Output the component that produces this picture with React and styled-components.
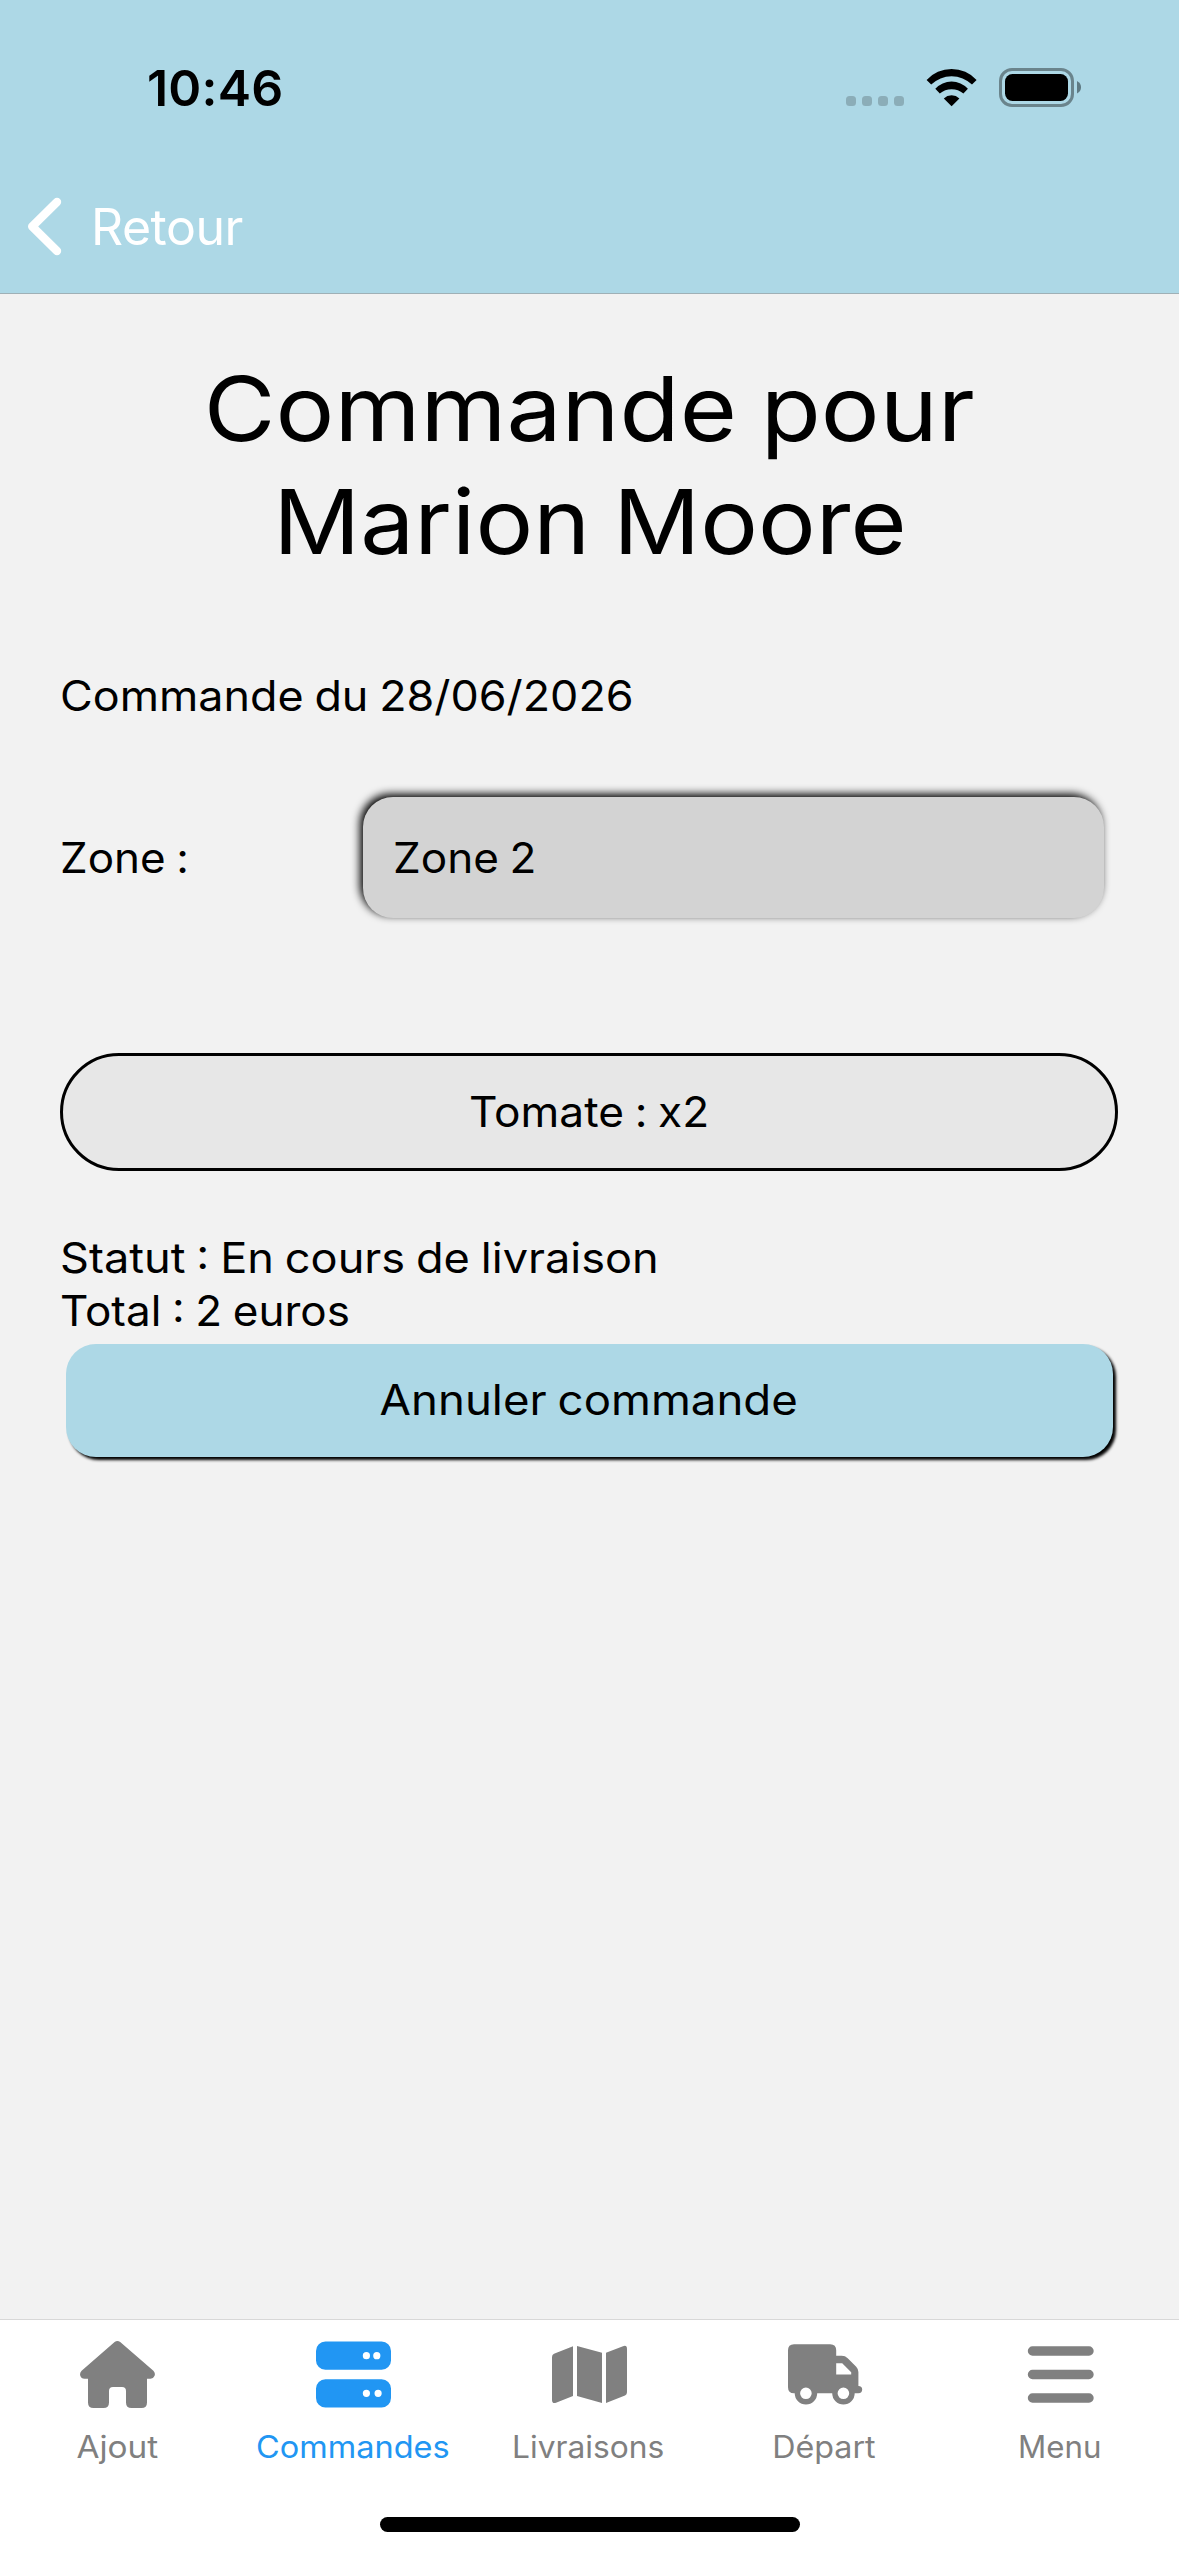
import React from "react";
import styled, { createGlobalStyle } from "styled-components";

const GlobalStyle = createGlobalStyle`
  * { box-sizing: border-box; }
  body { margin: 0; background: #f2f2f2; }
`;

const Screen = styled.div`
  width: 1179px;
  height: 2556px;
  display: flex;
  flex-direction: column;
  overflow: hidden;
  background: #f2f2f2;
  color: #000;
  font-family: Inter, "Liberation Sans", sans-serif;
  font-size: 42px;
  line-height: 53px;
`;

const Header = styled.header`
  height: 294px;
  flex: none;
  padding-top: 58px;
  background: #add8e6;
  border-bottom: 1px solid #9fb0b6;
`;

const StatusBar = styled.div`
  height: 60px;
  display: flex;
  justify-content: space-between;
  padding: 0 98px 0 147px;
`;

const Clock = styled.span`
  font-size: 50px;
  font-weight: 600;
  line-height: 60px;
  letter-spacing: 0.2px;
`;

const StatusIcons = styled.div`
  display: flex;
  align-items: flex-end;
  padding-bottom: 11px;
  svg { display: block; }
`;

const Signal = styled.div`
  display: flex;
  gap: 6px;
  margin: 0 22px 1px 0;
`;

const SignalDot = styled.i`
  width: 10px;
  height: 10px;
  border-radius: 3.5px;
  background: #8badb8;
`;

const WifiSvg = styled.svg`
  margin-right: 21px;
`;

const BackButton = styled.button`
  display: flex;
  align-items: center;
  gap: 27px;
  height: 60px;
  margin: 79px 0 0;
  padding: 0 0 0 26px;
  border: 0;
  background: none;
  color: #fff;
  font: 400 50px/60px Inter, "Liberation Sans", sans-serif;
  letter-spacing: -0.5px;
`;

const Content = styled.main`
  flex: 1;
  display: flex;
  flex-direction: column;
  padding: 58px 60px 0;
`;

/* Widened text: $wide is the horizontal stretch of the letters */
const Wide = styled.span`
  display: inline-block;
  word-spacing: -0.04em;
  white-space: pre;
  transform: scaleX(${(p) => p.$wide});
  transform-origin: ${(p) => (p.$center ? "center" : "left")};
`;

const Title = styled.h1`
  margin: 0;
  display: flex;
  flex-direction: column;
  align-items: center;
  font-size: 90px;
  font-weight: 420;
  line-height: 113px;
`;

const OrderDate = styled.div`
  margin-top: 91px;
`;

const ZoneRow = styled.div`
  display: flex;
  align-items: center;
  margin-top: 75px;
`;

const ZoneLabel = styled.label`
  width: 303px;
`;

const ZoneField = styled.div`
  width: 741px;
  height: 121px;
  display: flex;
  align-items: center;
  padding-left: 30px;
  border-radius: 30px;
  background: #d3d3d3;
  box-shadow: -3px -3px 8px #000;
`;

const ProductPill = styled.div`
  width: 1058px;
  height: 118px;
  margin-top: 135px;
  display: flex;
  align-items: center;
  justify-content: center;
  padding-bottom: 2px;
  border: 3px solid #000;
  border-radius: 60px;
  background: #e7e7e7;
`;

const Summary = styled.div`
  display: flex;
  flex-direction: column;
  margin-top: 60px;
`;

const CancelButton = styled.button`
  width: 1047px;
  height: 113px;
  margin: 7px 0 0 6px;
  display: flex;
  align-items: center;
  justify-content: center;
  padding: 0 1px 2px 0;
  border: 0;
  border-radius: 30px;
  background: #add8e6;
  box-shadow: 3px 3px 3px #000;
  color: #000;
  font: inherit;
`;

const TabBar = styled.nav`
  flex: none;
  height: 237px;
  display: grid;
  grid-template-columns: repeat(5, 1fr);
  grid-template-rows: 197px 15px;
  border-top: 1px solid #d8d8d8;
  background: #fff;
`;

const Tab = styled.a`
  display: flex;
  flex-direction: column;
  align-items: center;
  padding-top: 17px;
  color: ${(p) => (p.$active ? "#2196f3" : "#808080")};
  font-size: 30.5px;
  line-height: 38px;
  svg { display: block; margin-bottom: 16px; }
`;

const TabLabel = styled(Wide)`
  margin-right: 2px;
`;

const HomeIndicator = styled.div`
  grid-column: 1 / -1;
  justify-self: center;
  width: 420px;
  height: 15px;
  margin-left: 1px;
  border-radius: 8px;
  background: #000;
`;

const icons = {
  home: (
    <path
      fillRule="evenodd"
      d="M34.6 5Q37.4 2.8 40.2 5L73.4 33.7Q75.6 36 74.6 38.8Q73.6 41.6 70.5 41.7H67V65.5Q67 71 61.5 71H51.5Q46 71 46 65.5V54Q46 50 42 50H33Q29 50 29 54V65.5Q29 71 23.5 71H13.5Q8 71 8 65.5V41.7H4.5Q1.2 41.6 .3 38.8Q-.6 36 1.6 33.7Z"
    />
  ),
  server: (
    <path
      fillRule="evenodd"
      d="M9.4 4.6H65.6A9.4 9.4 0 0 1 75 14V23.4A9.4 9.4 0 0 1 65.6 32.8H9.4A9.4 9.4 0 0 1 0 23.4V14A9.4 9.4 0 0 1 9.4 4.6ZM46.8 18.7a3.6 3.6 0 1 0 7.2 0a3.6 3.6 0 1 0 -7.2 0ZM57.2 18.7a3.6 3.6 0 1 0 7.2 0a3.6 3.6 0 1 0 -7.2 0ZM9.4 42.2H65.6A9.4 9.4 0 0 1 75 51.6V61A9.4 9.4 0 0 1 65.6 70.4H9.4A9.4 9.4 0 0 1 0 61V51.6A9.4 9.4 0 0 1 9.4 42.2ZM46.8 56.3a3.6 3.6 0 1 0 7.2 0a3.6 3.6 0 1 0 -7.2 0ZM58.5 56.3a3.6 3.6 0 1 0 7.2 0a3.6 3.6 0 1 0 -7.2 0Z"
    />
  ),
  map: (
    <path d="M21 9.2V59L4 65.8Q0 67 0 63V20Q0 17.7 2 16.8ZM25 9L50 15.8V66L25 59ZM54 15.8L71 9.2Q75 7.8 75 12V55.3Q75 57.5 73 58.4L54 66Z" />
  ),
  truck: (
    <path
      fillRule="evenodd"
      transform="translate(-.8 0)"
      d="M6.8 7.2H43Q49 7.2 49 13.2V18.8H54.5Q58 18.8 60.5 21.2L69 29.7Q71.2 32 71.2 35V49Q75 49.2 75 52.6Q75 56.2 71.2 56.2H67.5A11.2 11.2 0 0 1 45 56.2H30A11.2 11.2 0 0 1 7.5 56.2H6.8Q.8 56.2 .8 50.2V13.2Q.8 7.2 6.8 7.2ZM49 26.3V37.6H64V35.2L55 26.3ZM12.9 56.3a5.8 5.8 0 1 0 11.6 0a5.8 5.8 0 1 0 -11.6 0ZM50.4 56.3a5.8 5.8 0 1 0 11.6 0a5.8 5.8 0 1 0 -11.6 0Z"
    />
  ),
  menu: (
    <path d="M8.5 14H65M8.5 37.5H65M8.5 61H65" stroke="currentColor" strokeWidth="9.4" strokeLinecap="round" />
  ),
};

const tabs = [
  { label: "Ajout", icon: "home", wide: 1.094 },
  { label: "Commandes", icon: "server", wide: 1.065, active: true },
  { label: "Livraisons", icon: "map", wide: 1.04 },
  { label: "Départ", icon: "truck", wide: 1.058 },
  { label: "Menu", icon: "menu", wide: 1.024 },
];

export default function App() {
  return (
    <Screen>
      <GlobalStyle />
      <Header>
        <StatusBar>
          <Clock>10:46</Clock>
          <StatusIcons>
            <Signal>
              <SignalDot />
              <SignalDot />
              <SignalDot />
              <SignalDot />
            </Signal>
            <WifiSvg width="52" height="39" viewBox="0 0 52 39">
              <path d="M.6 12A33.8 33.8 0 0 1 50.6 12L46 16.6A29.2 29.2 0 0 0 5.2 16.6Z" />
              <path d="M9.3 20.7A22.2 22.2 0 0 1 41.9 20.7L37.4 25.6A18 18 0 0 0 13.8 25.6Z" />
              <path d="M17.8 30.4A11.5 11.5 0 0 1 33.4 30.4L25.6 38.2Z" />
            </WifiSvg>
            <svg width="82" height="39" viewBox="0 0 82 39">
              <rect x="1.5" y="1.5" width="72" height="36" rx="11.5" fill="none" stroke="#6a848c" strokeWidth="3" />
              <rect x="6" y="6" width="63" height="27" rx="7.5" />
              <path d="M78 13Q82 15 82 19.2T78 25.5Z" fill="#5f7a83" />
            </svg>
          </StatusIcons>
        </StatusBar>
        <BackButton>
          <svg width="38" height="60" viewBox="0 0 38 60" fill="none">
            <path d="M31 5.5L6.2 30L31 54.5" stroke="#fff" strokeWidth="8.4" strokeLinecap="round" strokeLinejoin="round" transform="translate(0 -.5)" />
          </svg>
          Retour
        </BackButton>
      </Header>

      <Content>
        <Title>
          <Wide $wide={1.091} $center>Commande pour</Wide>
          <Wide $wide={1.07} $center>Marion Moore</Wide>
        </Title>
        <OrderDate>
          <Wide $wide={1.068}>Commande du 28/06/2026</Wide>
        </OrderDate>
        <ZoneRow>
          <ZoneLabel>
            <Wide $wide={1.047}>Zone :</Wide>
          </ZoneLabel>
          <ZoneField>
            <Wide $wide={1.05}>Zone 2</Wide>
          </ZoneField>
        </ZoneRow>
        <ProductPill>
          <Wide $wide={1.053} $center>Tomate : x2</Wide>
        </ProductPill>
        <Summary>
          <Wide $wide={1.074}>Statut : En cours de livraison</Wide>
          <Wide $wide={1.048}>Total : 2 euros</Wide>
        </Summary>
        <CancelButton>
          <Wide $wide={1.085} $center>Annuler commande</Wide>
        </CancelButton>
      </Content>

      <TabBar>
        {tabs.map((t) => (
          <Tab key={t.label} $active={t.active}>
            <svg width="75" height="75" viewBox="0 0 75 75" fill="currentColor">
              {icons[t.icon]}
            </svg>
            <TabLabel $wide={t.wide} $center>{t.label}</TabLabel>
          </Tab>
        ))}
        <HomeIndicator />
      </TabBar>
    </Screen>
  );
}
